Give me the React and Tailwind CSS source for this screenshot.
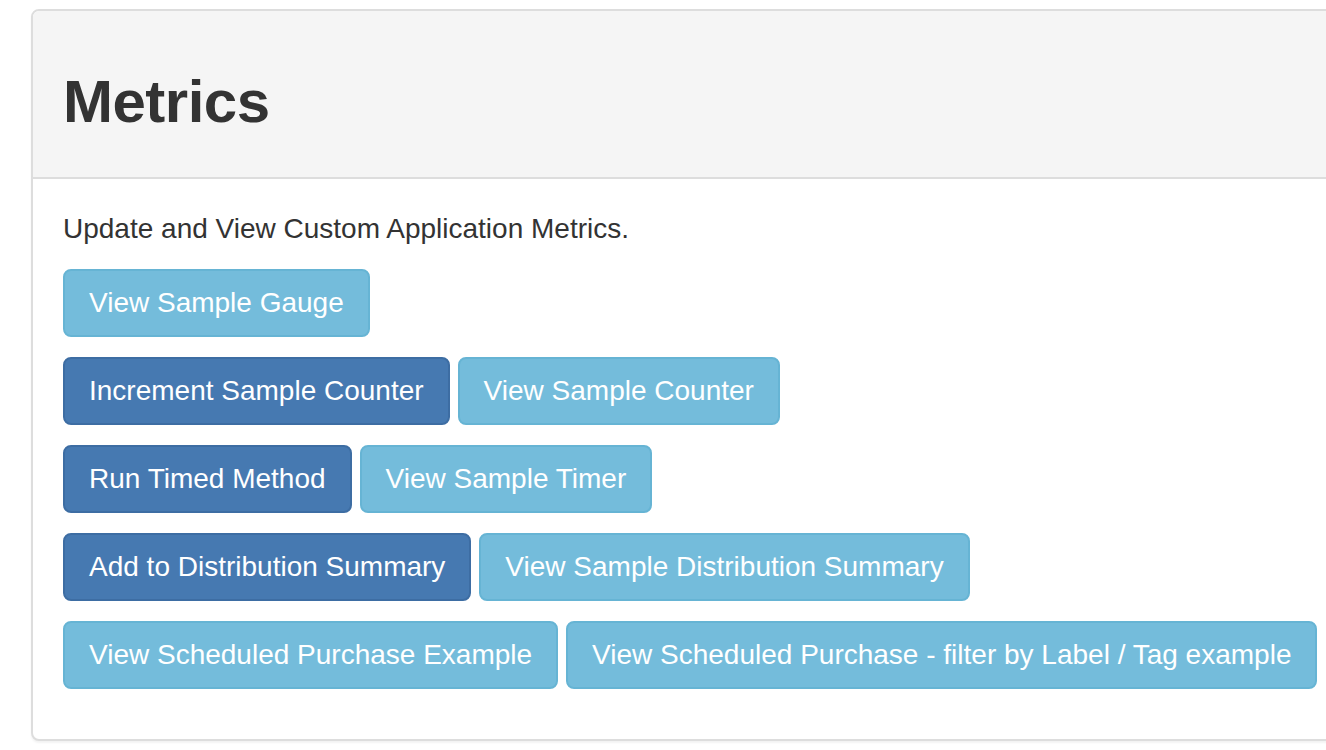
export default function App() {
  const rows = [
    [{ label: "View Sample Gauge", kind: "info" }],
    [
      { label: "Increment Sample Counter", kind: "primary" },
      { label: "View Sample Counter", kind: "info" },
    ],
    [
      { label: "Run Timed Method", kind: "primary" },
      { label: "View Sample Timer", kind: "info" },
    ],
    [
      { label: "Add to Distribution Summary", kind: "primary" },
      { label: "View Sample Distribution Summary", kind: "info" },
    ],
    [
      { label: "View Scheduled Purchase Example", kind: "info" },
      { label: "View Scheduled Purchase - filter by Label / Tag example", kind: "info" },
    ],
  ];

  return (
    <div
      className="w-[1326px] h-[750px] overflow-hidden bg-white pt-[9px] pl-[31px] text-[#333333]"
      style={{ fontFamily: '"Liberation Sans", Arial, sans-serif' }}
    >
      <div className="w-[1400px] border-2 border-[#dddddd] rounded-lg shadow-[0_2px_2px_rgba(0,0,0,0.05)] bg-white">
        <div className="bg-[#f5f5f5] border-b-2 border-[#dddddd] rounded-t-md px-[30px] pt-[58px] pb-[20px]">
          <h2 className="text-[60px] leading-[66px] font-bold tracking-[-0.5px] mb-[22px]">Metrics</h2>
        </div>
        <div className="p-[30px]">
          <p className="text-[28px] leading-[40px] mb-[20px]">Update and View Custom Application Metrics.</p>
          {rows.map((row, i) => (
            <div key={i} className="flex gap-[8px] mb-[20px]">
              {row.map((b) => (
                <button
                  key={b.label}
                  className={
                    b.kind === "primary"
                      ? "h-[68px] px-[24px] text-[28px] leading-[40px] text-white rounded-lg border-2 border-[#3d6da3] bg-[#4679b1] whitespace-nowrap"
                      : "h-[68px] px-[24px] text-[28px] leading-[40px] text-white rounded-lg border-2 border-[#66b4d4] bg-[#74bcdb] whitespace-nowrap"
                  }
                >
                  {b.label}
                </button>
              ))}
            </div>
          ))}
        </div>
      </div>
    </div>
  );
}
